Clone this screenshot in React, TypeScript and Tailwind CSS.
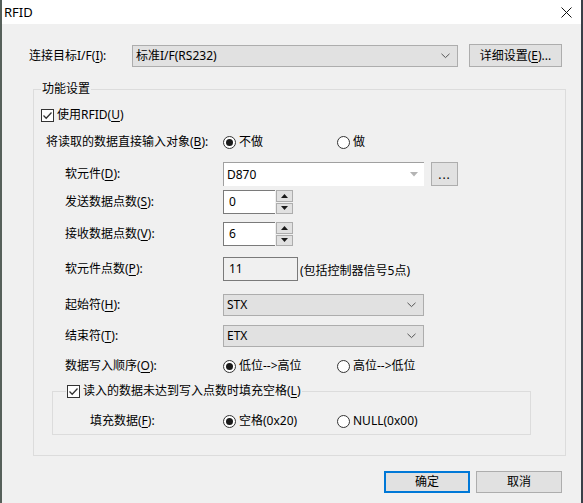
import React from "react";

const font = "font-['Noto_Sans','Noto_Sans_CJK_SC',sans-serif]";

const Key: React.FC<{ k: string }> = ({ k }) => <span className="underline underline-offset-[2px]">{k}</span>;

const Radio: React.FC<{ checked?: boolean; label: React.ReactNode }> = ({ checked, label }) => (
    <div className="flex items-center h-[16px]">
        <div className="w-[13px] h-[13px] rounded-full border border-[#333333] bg-white flex items-center justify-center">
            {checked && <div className="w-[7px] h-[7px] rounded-full bg-[#1a1a1a]" />}
        </div>
        <span className="ml-[3px] leading-[16px]">{label}</span>
    </div>
);

const CheckBox: React.FC<{ label: React.ReactNode }> = ({ label }) => (
    <div className="flex items-center h-[16px]">
        <div className="w-[13px] h-[13px] border border-[#333333] bg-white flex items-center justify-center">
            <svg width="11" height="11" viewBox="0 0 11 11">
                <path d="M1.5 5.5 L4.2 8.2 L9.5 2.5" fill="none" stroke="#333333" strokeWidth="1.3" />
            </svg>
        </div>
        <span className="ml-[3px] leading-[16px]">{label}</span>
    </div>
);

const Chevron = () => (
    <svg width="9" height="6" viewBox="0 0 9 6">
        <path d="M0.5 0.8 L4.5 4.6 L8.5 0.8" fill="none" stroke="#555555" strokeWidth="1" />
    </svg>
);

const Combo: React.FC<{ value: string; w: string }> = ({ value, w }) => (
    <div className={`${w} h-[22px] bg-[#e1e1e1] border border-[#adadad] flex items-center justify-between pl-[3px] pr-[7px]`}>
        <span className="leading-[16px]">{value}</span>
        <Chevron />
    </div>
);

const SpinArrow: React.FC<{ up?: boolean }> = ({ up }) => (
    <div className="flex-1 bg-[#e1e1e1] border border-[#adadad] flex items-center justify-center">
        <svg width="7" height="4" viewBox="0 0 7 4">
            {up ? <path d="M0 4 L3.5 0 L7 4 Z" fill="#1a1a1a" /> : <path d="M0 0 L3.5 4 L7 0 Z" fill="#1a1a1a" />}
        </svg>
    </div>
);

const Spin: React.FC<{ value: string }> = ({ value }) => (
    <div className="flex h-[24px]">
        <div className="w-[52px] h-full bg-white border border-r-0 border-[#7a7a7a] flex items-center pl-[5px]">
            <span className="leading-[16px]">{value}</span>
        </div>
        <div className="w-[17px] ml-[1px] flex flex-col gap-[1px]">
            <SpinArrow up />
            <SpinArrow />
        </div>
    </div>
);

const Row: React.FC<{ className: string; label: React.ReactNode; labelW?: string; children: React.ReactNode }> = ({ className, label, labelW = "w-[158px]", children }) => (
    <div className={`flex items-center ${className}`}>
        <div className={`${labelW} leading-[16px]`}>{label}</div>
        {children}
    </div>
);

const Button: React.FC<{ children: React.ReactNode; primary?: boolean }> = ({ children, primary }) => (
    <div
        className={`w-[86px] h-[22px] bg-[#e1e1e1] flex items-center justify-center ${
            primary ? "border-2 border-[#0078d7]" : "border border-[#adadad]"
        }`}
    >
        <span className="leading-[16px]">{children}</span>
    </div>
);

export default function App() {
    return (
        <div className={`w-[583px] h-[503px] flex bg-[#f0f0f0] text-[12px] text-black ${font}`}>
            <div className="w-[2px] bg-[#56605a]" />
            <div className="flex-1 flex flex-col">
                {/* title bar */}
                <div className="h-[24px] bg-white flex items-center justify-between pl-[2px] pr-[9px]">
                    <span className="leading-[16px] text-[13px]">RFID</span>
                    <svg width="11" height="11" viewBox="0 0 11 11">
                        <path d="M0.5 0.5 L10.5 10.5 M10.5 0.5 L0.5 10.5" stroke="#111111" strokeWidth="1" />
                    </svg>
                </div>

                <div className="flex flex-col">
                    {/* target I/F */}
                    <div className="flex items-center h-[23px] mt-[20px] ml-[27px]">
                        <div className="w-[103px] leading-[16px]">
                            连接目标I/F(<Key k="I" />):
                        </div>
                        <Combo value="标准I/F(RS232)" w="w-[326px]" />
                        <div className="ml-[11px] w-[93px] h-[23px] bg-[#e1e1e1] border border-[#adadad] flex items-center justify-center">
                            <span className="leading-[16px]">
                                详细设置(<Key k="E" />)...
                            </span>
                        </div>
                    </div>

                    {/* function settings */}
                    <fieldset className="ml-[31px] mt-[14px] w-[533px] border border-[#dcdcdc] pb-[20px]">
                        <legend className="ml-[7px] px-[1px] h-[16px] leading-[16px]">功能设置</legend>

                        <div className="ml-[7px] mt-[10px]">
                            <CheckBox
                                label={
                                    <>
                                        使用RFID(<Key k="U" />)
                                    </>
                                }
                            />
                        </div>

                        <Row
                            className="ml-[12px] mt-[11px] h-[16px]"
                            labelW="w-[177px]"
                            label={
                                <>
                                    将读取的数据直接输入对象(<Key k="B" />):
                                </>
                            }
                        >
                            <div className="w-[114px]">
                                <Radio checked label="不做" />
                            </div>
                            <Radio label="做" />
                        </Row>

                        <Row
                            className="ml-[31px] mt-[12px] h-[24px]"
                            label={
                                <>
                                    软元件(<Key k="D" />):
                                </>
                            }
                        >
                            <div className="w-[201px] h-[24px] bg-white border-t border-l border-[#a0a0a0] flex items-center justify-between pl-[3px] pr-[6px]">
                                <span className="leading-[16px]">D870</span>
                                <svg width="8" height="5" viewBox="0 0 8 5">
                                    <path d="M0 0 L8 0 L4 4.5 Z" fill="#b4b4b4" />
                                </svg>
                            </div>
                            <div className="ml-[7px] w-[27px] h-[24px] bg-[#e1e1e1] border border-[#adadad] flex items-end justify-center pb-[4px]">
                                <span className="leading-[12px] tracking-[1px]">...</span>
                            </div>
                        </Row>

                        <Row
                            className="ml-[31px] mt-[4px] h-[24px]"
                            label={
                                <>
                                    发送数据点数(<Key k="S" />):
                                </>
                            }
                        >
                            <Spin value="0" />
                        </Row>

                        <Row
                            className="ml-[31px] mt-[8px] h-[24px]"
                            label={
                                <>
                                    接收数据点数(<Key k="V" />):
                                </>
                            }
                        >
                            <Spin value="6" />
                        </Row>

                        <Row
                            className="ml-[31px] mt-[11px] h-[24px]"
                            label={
                                <>
                                    软元件点数(<Key k="P" />):
                                </>
                            }
                        >
                            <div className="w-[75px] h-[24px] border border-[#7a7a7a] flex items-center pl-[5px]">
                                <span className="leading-[16px]">11</span>
                            </div>
                            <span className="ml-[2px] leading-[16px] mt-[4px]">(包括控制器信号5点)</span>
                        </Row>

                        <Row
                            className="ml-[31px] mt-[13px] h-[22px]"
                            label={
                                <>
                                    起始符(<Key k="H" />):
                                </>
                            }
                        >
                            <Combo value="STX" w="w-[201px]" />
                        </Row>

                        <Row
                            className="ml-[31px] mt-[9px] h-[22px]"
                            label={
                                <>
                                    结束符(<Key k="T" />):
                                </>
                            }
                        >
                            <Combo value="ETX" w="w-[201px]" />
                        </Row>

                        <Row
                            className="ml-[31px] mt-[11px] h-[16px]"
                            label={
                                <>
                                    数据写入顺序(<Key k="O" />):
                                </>
                            }
                        >
                            <div className="w-[114px]">
                                <Radio checked label="低位-->高位" />
                            </div>
                            <Radio label="高位-->低位" />
                        </Row>

                        {/* fill settings */}
                        <fieldset className="ml-[18px] mt-[9px] w-[479px] border border-[#dcdcdc] pb-[5px]">
                            <legend className="ml-[13px] px-[1px] h-[16px]">
                                <CheckBox
                                    label={
                                        <>
                                            读入的数据未达到写入点数时填充空格(<Key k="L" />)
                                        </>
                                    }
                                />
                            </legend>
                            <Row
                                className="ml-[37px] mt-[14px] h-[16px]"
                                labelW="w-[133px]"
                                label={
                                    <>
                                        填充数据(<Key k="F" />):
                                    </>
                                }
                            >
                                <div className="w-[114px]">
                                    <Radio checked label="空格(0x20)" />
                                </div>
                                <Radio label="NULL(0x00)" />
                            </Row>
                        </fieldset>
                    </fieldset>

                    {/* dialog buttons */}
                    <div className="flex justify-end gap-[6px] mt-[15px] pr-[19px]">
                        <Button primary>确定</Button>
                        <Button>取消</Button>
                    </div>
                </div>
            </div>
            <div className="w-[2px] bg-[#3a3f48]" />
        </div>
    );
}
